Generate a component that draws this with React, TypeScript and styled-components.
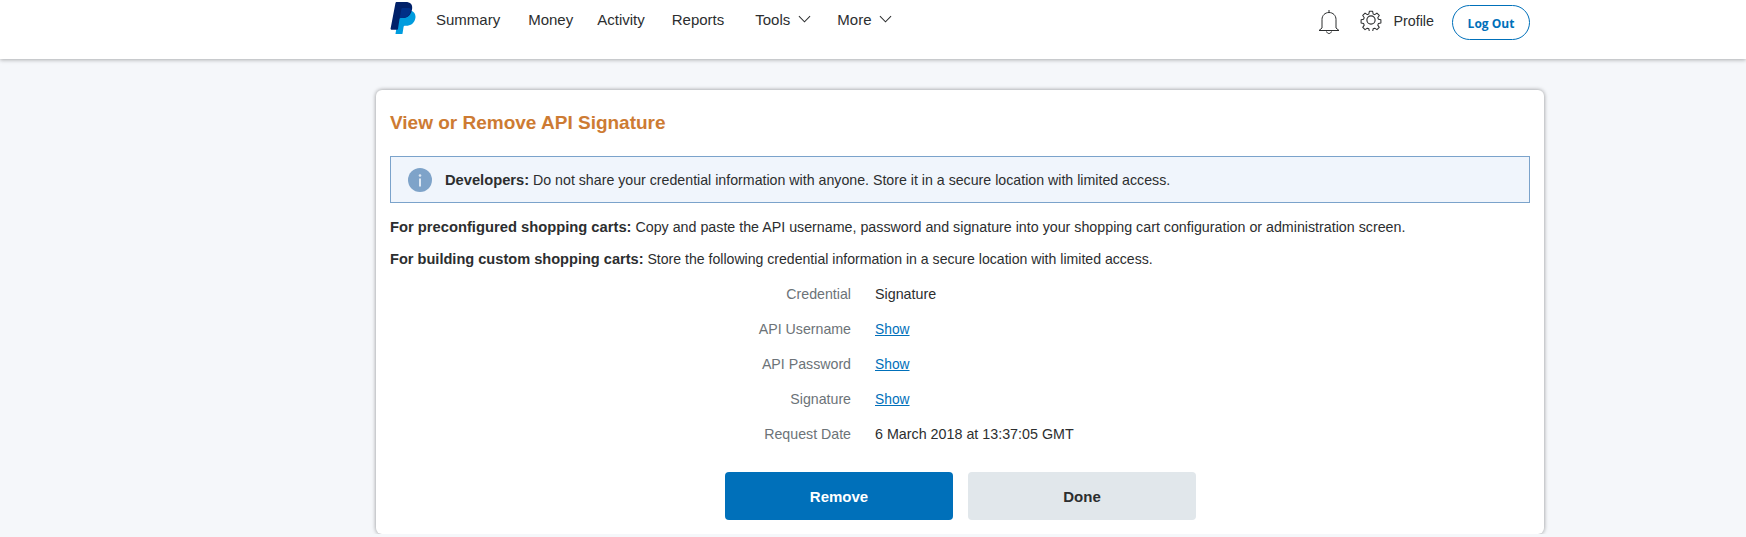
import React from "react";
import styled, { createGlobalStyle } from "styled-components";

const GlobalStyle = createGlobalStyle`
  html, body { margin: 0; padding: 0; }
  body {
    background: #f5f7fa;
    font-family: "Liberation Sans", Arial, sans-serif;
    font-size: 14px;
    color: #2c2e2f;
    overflow: hidden;
  }
  strong { font-size: 1.035em; }
`;

const Header = styled.header`
  height: 59px;
  background: #fff;
  box-shadow: 0 1px 4px rgba(0, 0, 0, 0.3);
  padding: 0 216px 0 390px;
  display: flex;
  align-items: flex-start;
  justify-content: space-between;
`;

const Left = styled.div`
  display: flex;
  align-items: flex-start;
`;

const Logo = styled.svg`
  width: 26px;
  height: 32px;
  margin-top: 2px;
  margin-right: 20px;
`;

const NavItem = styled.a<{ $gap: number }>`
  display: flex;
  align-items: center;
  gap: 8px;
  height: 38px;
  margin-right: ${(p) => p.$gap}px;
  font-size: 15px;
  color: #2c2e2f;
`;

const Right = styled.div`
  display: flex;
  align-items: flex-start;
`;

const IconBtn = styled.svg<{ $mr: number; $sw: number }>`
  margin-top: 9px;
  margin-right: ${(p) => p.$mr}px;
  fill: none;
  stroke: #2c2e2f;
  stroke-width: ${(p) => p.$sw};
`;

const ProfileText = styled.span`
  line-height: 42px;
  height: 42px;
  margin-right: 18px;
  font-size: 14.3px;
`;

const LogOut = styled.button`
  width: 78px;
  height: 35px;
  margin-top: 5px;
  border: 1px solid #0070ba;
  border-radius: 18px;
  background: #fff;
  color: #0070ba;
  font-family: "Open Sans", sans-serif;
  font-weight: 700;
  font-size: 12px;
  padding: 1px 0 0;
`;

const Card = styled.main`
  width: 1168px;
  height: 444px;
  box-sizing: border-box;
  margin: 31px 0 0 376px;
  padding: 0 14px;
  background: #fff;
  border-radius: 6px;
  box-shadow: 0 0 4px rgba(0, 0, 0, 0.42);
`;

const Title = styled.h1`
  margin: 0;
  padding-top: 22px;
  height: 47px;
  font-size: 19px;
  line-height: 22px;
  font-weight: 700;
  color: #cd7b33;
  box-sizing: border-box;
`;

const Alert = styled.div`
  margin-top: 19px;
  height: 47px;
  box-sizing: border-box;
  border: 1px solid #7ba3cb;
  background: #f0f5fc;
  display: flex;
  align-items: center;
  padding-left: 17px;
  font-size: 14.2px;
  gap: 13px;
`;

const InfoIcon = styled.svg`
  width: 24px;
  height: 24px;
  flex: none;
`;

const Para = styled.p<{ $size: number }>`
  margin: 15px 0 0;
  line-height: 18px;
  font-size: ${(p) => p.$size}px;

  & + & {
    margin-top: 14px;
  }
`;

const Details = styled.dl`
  margin: 8px 0 0;
  display: grid;
  grid-template-columns: 461px 1fr;
  column-gap: 24px;
  grid-auto-rows: 35px;
  align-items: center;
`;

const Label = styled.dt`
  margin: 0;
  text-align: right;
  color: #6c7378;
  font-size: 14.2px;
`;

const Value = styled.dd`
  margin: 0;
  font-size: 14.3px;
`;

const ShowLink = styled.a`
  color: #0070ba;
  font-size: 13.8px;
  text-decoration: underline;
`;

const Buttons = styled.div`
  margin-top: 21px;
  display: flex;
  justify-content: center;
  gap: 15px;
  padding-left: 1px;
`;

const Button = styled.button<{ $primary?: boolean }>`
  width: 228px;
  height: 48px;
  border: 0;
  border-radius: 4px;
  background: ${(p) => (p.$primary ? "#0070ba" : "#e1e7eb")};
  color: ${(p) => (p.$primary ? "#fff" : "#2c2e2f")};
  font-family: "Liberation Sans", Arial, sans-serif;
  font-weight: 700;
  font-size: 15px;
`;

const Chevron = () => (
  <svg width="13" height="8" viewBox="0 0 14 8" fill="none" stroke="#2c2e2f" strokeWidth="1.1">
    <path d="M1 1l6 6 6-6" />
  </svg>
);

const rows = [
  { label: "Credential", value: "Signature" },
  { label: "API Username", link: true },
  { label: "API Password", link: true },
  { label: "Signature", link: true },
  { label: "Request Date", value: "6 March 2018 at 13:37:05 GMT" },
];

const App = () => {
  return (
    <>
      <GlobalStyle />
      <Header>
        <Left>
          <Logo viewBox="0 0 24.5 31.5">
            <path fill="#009cde" d="M20.5 8.5c3 1.2 4.6 3.8 3.9 7.6-.9 5-4.5 7.4-9.3 7.4h-1.2c-.6 0-1 .4-1.1 1l-1 6.5c-.1.5-.5.9-1 .9H5.6c-.5 0-.8-.4-.7-.9L8 13h9z" />
            <path fill="#012169" d="M7.2 0h7.6c4.6 0 7.2 2.4 6.4 7-.1.5-.2 1-.4 1.6-1.4 5.3-5 7.2-9.5 7.2H9.9c-.6 0-1 .4-1.1 1L7.3 26.5c-.1.4-.4.7-.8.7H.8c-.5 0-.9-.4-.8-.9L4.8 1.3C4.9.5 5.5 0 6.3 0z" />
            <path fill="#003087" d="M8.9 15.9 10.7 6.700c.1-.4.4-.7.8-.7h5.500c1.400 0 2.600.3 3.400 1-.1.5-.2 1-.4 1.600-1.400 5.300-5 7.200-9.500 7.200H9.900c-.4 0-.8 0-1 .1z" />
          </Logo>
          <NavItem $gap={28}>Summary</NavItem>
          <NavItem $gap={24}>Money</NavItem>
          <NavItem $gap={27}>Activity</NavItem>
          <NavItem $gap={31}>Reports</NavItem>
          <NavItem $gap={26}>Tools <Chevron /></NavItem>
          <NavItem $gap={0}>More <Chevron /></NavItem>
        </Left>
        <Right>
          <IconBtn $mr={20} $sw={1} width="22" height="26" viewBox="0 0 22 26">
            <path d="M11 1v2.500M4 19V10.500C4 6.500 7 3.500 11 3.500s7 3 7 7V19l3 2.500H1L4 19zM8.500 22.500c.5 1.300 1.300 2 2.500 2s2-.7 2.500-2" />
          </IconBtn>
          <IconBtn $mr={11} $sw={1.25} width="22" height="22" viewBox="0 0 24 24" strokeLinejoin="round">
            <circle cx="12" cy="12" r="4.500" />
            <path d="M10 1.500h4l.6 3.200 1.900.8 2.700-1.800 2.800 2.800-1.800 2.700.8 1.900 3 .6v4l-3 .6-.8 1.900 1.800 2.700-2.800 2.800-2.700-1.800-1.900.8-.6 3.200h-4l-.6-3.200-1.900-.8-2.700 1.800-2.800-2.800 1.800-2.700-.8-1.900-3-.6v-4l3-.6.8-1.900-1.800-2.700 2.800-2.800 2.700 1.800 1.900-.8z" transform="translate(1.200 1.200) scale(.9)" />
          </IconBtn>
          <ProfileText>Profile</ProfileText>
          <LogOut>Log Out</LogOut>
        </Right>
      </Header>
      <Card>
        <Title>View or Remove API Signature</Title>
        <Alert>
          <InfoIcon viewBox="0 0 24 24">
            <circle cx="12" cy="12" r="12" fill="#7ea3c9" />
            <rect x="11" y="10.500" width="2" height="8" fill="#dfe9f4" />
            <circle cx="12" cy="7.500" r="1.300" fill="#dfe9f4" />
          </InfoIcon>
          <span>
            <strong>Developers:</strong> Do not share your credential information with anyone. Store it in a secure location with limited access.
          </span>
        </Alert>
        <Para $size={14.25}>
          <strong>For preconfigured shopping carts:</strong> Copy and paste the API username, password and signature into your shopping cart configuration or administration screen.
        </Para>
        <Para $size={14.1}>
          <strong>For building custom shopping carts:</strong> Store the following credential information in a secure location with limited access.
        </Para>
        <Details>
          {rows.map((r) => (
            <React.Fragment key={r.label}>
              <Label>{r.label}</Label>
              <Value>{r.link ? <ShowLink href="#">Show</ShowLink> : r.value}</Value>
            </React.Fragment>
          ))}
        </Details>
        <Buttons>
          <Button $primary>Remove</Button>
          <Button>Done</Button>
        </Buttons>
      </Card>
    </>
  );
};

export default App;
